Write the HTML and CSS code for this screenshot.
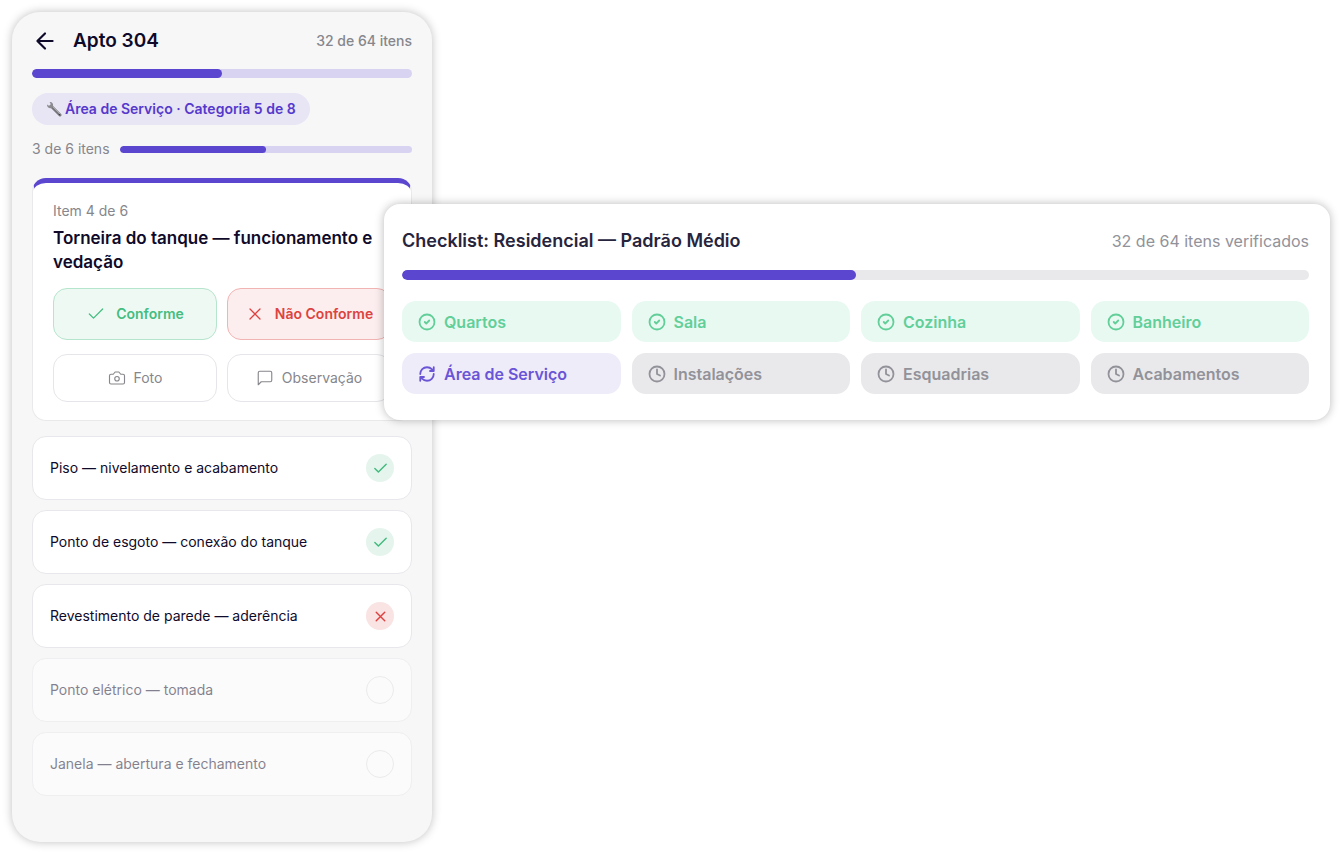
FILE: index.html
```
<!DOCTYPE html>
<html lang="pt-BR">
<head>
    <meta charset="UTF-8">
    <meta name="viewport" content="width=device-width, initial-scale=1.0">
    <title>Checklist - Apto 304</title>
    <link rel="stylesheet" href="styles.css">
</head>
<body>
    <svg class="sprite" aria-hidden="true">
        <symbol id="check" viewBox="0 0 24 24"><path d="M20 6 9 17l-5-5"/></symbol>
        <symbol id="x" viewBox="0 0 24 24"><path d="M18 6 6 18M6 6l12 12"/></symbol>
        <symbol id="circle-check" viewBox="0 0 24 24"><circle cx="12" cy="12" r="10"/><path d="m9 12 2 2 4-4"/></symbol>
        <symbol id="clock" viewBox="0 0 24 24"><circle cx="12" cy="12" r="10"/><path d="M12 6v6l4 2"/></symbol>
        <symbol id="refresh" viewBox="0 0 24 24"><path d="M3 12a9 9 0 0 1 9-9 9.75 9.75 0 0 1 6.74 2.74L21 8M21 3v5h-5M21 12a9 9 0 0 1-9 9 9.75 9.75 0 0 1-6.74-2.74L3 16M8 16H3v5"/></symbol>
    </svg>

    <div class="container">
        <main class="phone">
            <header class="phone-header">
                <button type="button" class="back-button" aria-label="Voltar">
                    <svg class="icon icon-back" viewBox="0 0 24 24"><path d="m12 19-7-7 7-7M19 12H5"/></svg>
                </button>
                <h1>Apto 304</h1>
                <span class="counter">32 de 64 itens</span>
            </header>
            <div class="progress"><div class="progress-fill" style="width: 50%"></div></div>

            <div class="category">
                <svg class="wrench" viewBox="0 0 16 16" aria-hidden="true">
                    <path d="m5 5 9 9" stroke="#77777c" stroke-width="3" stroke-linecap="round"/>
                    <path d="m5 4 9 9" stroke="#a9a9ae" stroke-width="1" stroke-linecap="round"/>
                    <path d="M1 3.4 3.4 5 5 3.4 3.6 1C5.6.6 7.3 2 7.1 4.2L7 6 5.7 7.1C3 7.6.8 6 1 3.4Z" fill="#8b8b90"/>
                    <circle cx="13.4" cy="13.6" r=".7" fill="#38383c"/>
                </svg>
                <span>Área de Serviço · Categoria 5 de 8</span>
            </div>

            <div class="category-progress">
                <span>3 de 6 itens</span>
                <div class="progress progress-small"><div class="progress-fill" style="width: 50%"></div></div>
            </div>

            <section class="current-item">
                <p class="item-number">Item 4 de 6</p>
                <h2>Torneira do tanque — funcionamento e vedação</h2>
                <div class="actions">
                    <button type="button" class="action action-ok"><svg class="icon icon-large"><use href="#check"/></svg>Conforme</button>
                    <button type="button" class="action action-fail"><svg class="icon icon-large"><use href="#x"/></svg>Não Conforme</button>
                    <button type="button" class="action action-extra">
                        <svg class="icon" viewBox="0 0 24 24"><path d="M14.5 4h-5L7 7H4a2 2 0 0 0-2 2v9a2 2 0 0 0 2 2h16a2 2 0 0 0 2-2V9a2 2 0 0 0-2-2h-3z"/><circle cx="12" cy="13" r="3"/></svg>
                        Foto
                    </button>
                    <button type="button" class="action action-extra">
                        <svg class="icon" viewBox="0 0 24 24"><path d="M21 15a2 2 0 0 1-2 2H7l-4 4V5a2 2 0 0 1 2-2h14a2 2 0 0 1 2 2z"/></svg>
                        Observação
                    </button>
                </div>
            </section>

            <ul class="items">
                <li class="item">Piso — nivelamento e acabamento <span class="status status-ok"><svg class="icon"><use href="#check"/></svg></span></li>
                <li class="item">Ponto de esgoto — conexão do tanque <span class="status status-ok"><svg class="icon"><use href="#check"/></svg></span></li>
                <li class="item">Revestimento de parede — aderência <span class="status status-fail"><svg class="icon"><use href="#x"/></svg></span></li>
                <li class="item item-pending">Ponto elétrico — tomada <span class="status"></span></li>
                <li class="item item-pending">Janela — abertura e fechamento <span class="status"></span></li>
            </ul>
        </main>

        <section class="checklist">
            <header class="checklist-header">
                <h2>Checklist: Residencial — Padrão Médio</h2>
                <span>32 de 64 itens verificados</span>
            </header>
            <div class="progress progress-gray"><div class="progress-fill" style="width: 50%"></div></div>
            <ul class="rooms">
                <li class="room room-done"><svg class="icon"><use href="#circle-check"/></svg>Quartos</li>
                <li class="room room-done"><svg class="icon"><use href="#circle-check"/></svg>Sala</li>
                <li class="room room-done"><svg class="icon"><use href="#circle-check"/></svg>Cozinha</li>
                <li class="room room-done"><svg class="icon"><use href="#circle-check"/></svg>Banheiro</li>
                <li class="room room-active"><svg class="icon"><use href="#refresh"/></svg>Área de Serviço</li>
                <li class="room"><svg class="icon"><use href="#clock"/></svg>Instalações</li>
                <li class="room"><svg class="icon"><use href="#clock"/></svg>Esquadrias</li>
                <li class="room"><svg class="icon"><use href="#clock"/></svg>Acabamentos</li>
            </ul>
        </section>
    </div>
</body>
</html>
```
FILE: styles.css
```
* {
    box-sizing: border-box;
}

body {
    font-family: Inter, "Liberation Sans", sans-serif;
    font-size: 14px;
    line-height: 20px;
    margin: 0;
    background-color: #ffffff;
    color: #0f0a2a;
}

h1,
h2,
p,
ul {
    margin: 0;
    padding: 0;
}

ul {
    list-style: none;
}

button {
    font: inherit;
    cursor: pointer;
}

.sprite {
    position: absolute;
    width: 0;
    height: 0;
}

.container {
    display: flex;
    align-items: flex-start;
    padding: 12px;
}

.icon {
    width: 18px;
    height: 18px;
    flex-shrink: 0;
    fill: none;
    stroke: currentColor;
    stroke-width: 1.5;
    stroke-linecap: round;
    stroke-linejoin: round;
}

.icon-large {
    width: 20px;
    height: 20px;
}

/* celular */
.phone {
    width: 420px;
    flex-shrink: 0;
    padding: 16px 20px 46px;
    background-color: #f7f7f7;
    border-radius: 28px;
    box-shadow: 0 0 10px rgba(0, 0, 0, 0.25);
}

.phone-header {
    display: flex;
    align-items: center;
    height: 25px;
    margin-bottom: 16px;
}

.back-button {
    display: flex;
    padding: 0;
    border: none;
    background: none;
    color: inherit;
    margin-right: 15px;
}

.icon-back {
    width: 26px;
    height: 26px;
    stroke-width: 2;
}

.phone h1 {
    font-size: 19px;
    font-weight: 600;
}

.counter {
    margin-left: auto;
    font-weight: 500;
    color: #86868c;
}

.progress {
    height: 9px;
    border-radius: 5px;
    background-color: #d8d3f0;
    overflow: hidden;
}

.progress-fill {
    height: 100%;
    border-radius: 5px;
    background-color: #5b46d0;
}

.progress-small {
    flex: 1;
    height: 7px;
}

.category {
    display: flex;
    align-items: center;
    gap: 3px;
    width: fit-content;
    height: 32px;
    margin: 15px 0 14px;
    padding: 0 14px;
    border-radius: 16px;
    background-color: #e8e5f5;
    color: #5539cc;
    font-weight: 600;
}

.wrench {
    width: 16px;
    height: 16px;
    fill: none;
}

.category-progress {
    display: flex;
    align-items: center;
    gap: 10px;
    color: #86868c;
    margin-bottom: 19px;
}

.current-item {
    padding: 18px 20px 18px;
    background-color: #ffffff;
    border: 1px solid #e9e9ec;
    border-top: 5px solid #5b46d0;
    border-radius: 14px;
    margin-bottom: 15px;
}

.item-number {
    color: #86868c;
}

.current-item h2 {
    font-size: 17px;
    line-height: 24px;
    font-weight: 600;
    margin: 5px 0 14px;
}

.actions {
    display: grid;
    grid-template-columns: 1fr 1fr;
    gap: 14px 10px;
}

.action {
    display: flex;
    align-items: center;
    justify-content: center;
    gap: 8px;
    height: 52px;
    padding: 0;
    border: 1px solid #e6e6ea;
    border-radius: 14px;
    background-color: #ffffff;
    color: #86868c;
}

.action-ok {
    gap: 10px;
    font-weight: 600;
    color: #45bd80;
    background-color: #eff9f4;
    border-color: #b5e5cc;
}

.action-fail {
    gap: 10px;
    font-weight: 600;
    color: #dc4340;
    background-color: #fceeee;
    border-color: #f2b3b3;
}

.action-extra {
    height: 48px;
}

.items {
    display: flex;
    flex-direction: column;
    gap: 10px;
}

.item {
    display: flex;
    align-items: center;
    justify-content: space-between;
    height: 64px;
    padding: 0 17px;
    background-color: #ffffff;
    border: 1px solid #e8e8ec;
    border-radius: 14px;
}

.item-pending {
    opacity: 0.5;
}

.status {
    display: flex;
    align-items: center;
    justify-content: center;
    width: 28px;
    height: 28px;
    border: 1px solid #e0e0e4;
    border-radius: 50%;
}

.status .icon {
    width: 17px;
    height: 17px;
    stroke-width: 2;
}

.status-ok {
    border: none;
    background-color: #e5f5ed;
    color: #40bb7c;
}

.status-fail {
    border: none;
    background-color: #fae3e3;
    color: #dc4340;
}

/* painel sobre o celular */
.checklist {
    flex: 1;
    min-width: 0;
    position: relative;
    margin: 192px 0 0 -48px;
    padding: 25px 21px 26px 18px;
    background-color: #ffffff;
    border-radius: 16px;
    box-shadow: 0 0 10px rgba(0, 0, 0, 0.28);
}

.checklist-header {
    display: flex;
    align-items: center;
    justify-content: space-between;
    height: 24px;
    margin-bottom: 17px;
    font-size: 16px;
    color: #92929a;
}

.checklist-header h2 {
    font-size: 18px;
    font-weight: 600;
    color: #27243d;
}

.progress-gray {
    height: 10px;
    background-color: #e9e9eb;
}

.rooms {
    display: grid;
    grid-template-columns: repeat(4, 1fr);
    gap: 11px;
    margin-top: 21px;
}

.room {
    display: flex;
    align-items: center;
    gap: 8px;
    height: 41px;
    padding: 0 16px;
    border-radius: 14px;
    background-color: #e9e9eb;
    color: #92929a;
    font-size: 16px;
    font-weight: 600;
}

.room .icon {
    stroke-width: 2.4;
}

.room-done {
    background-color: #e8f9f2;
    color: #62cf99;
}

.room-active {
    background-color: #efecfa;
    color: #6a55d6;
}
```
